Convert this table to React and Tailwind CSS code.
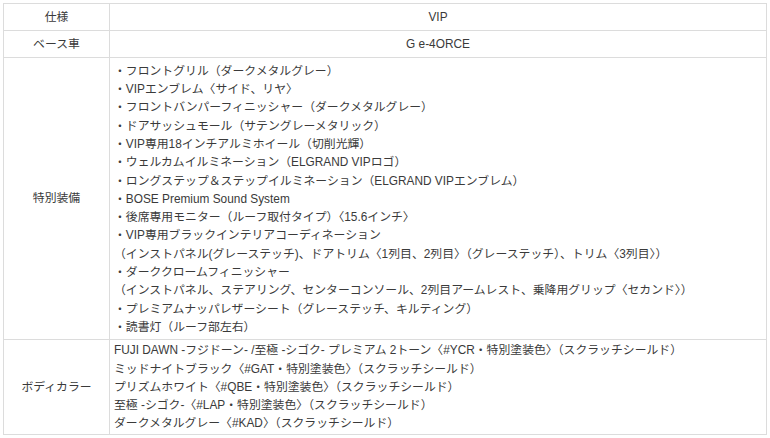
import React from "react";

const equipo = [
  "・フロントグリル（ダークメタルグレー）",
  "・VIPエンブレム〈サイド、リヤ〉",
  "・フロントバンパーフィニッシャー（ダークメタルグレー）",
  "・ドアサッシュモール（サテングレーメタリック）",
  "・VIP専用18インチアルミホイール（切削光輝）",
  "・ウェルカムイルミネーション（ELGRAND VIPロゴ）",
  "・ロングステップ＆ステップイルミネーション（ELGRAND VIPエンブレム）",
  "・BOSE Premium Sound System",
  "・後席専用モニター（ルーフ取付タイプ）〈15.6インチ〉",
  "・VIP専用ブラックインテリアコーディネーション",
  "（インストパネル(グレーステッチ)、ドアトリム〈1列目、2列目〉（グレーステッチ）、トリム〈3列目〉）",
  "・ダーククロームフィニッシャー",
  "（インストパネル、ステアリング、センターコンソール、2列目アームレスト、乗降用グリップ〈セカンド〉）",
  "・プレミアムナッパレザーシート（グレーステッチ、キルティング）",
  "・読書灯（ルーフ部左右）",
];

const colores = [
  "FUJI DAWN -フジドーン- /至極 -シゴク- プレミアム 2トーン〈#YCR・特別塗装色〉（スクラッチシールド）",
  "ミッドナイトブラック〈#GAT・特別塗装色〉（スクラッチシールド）",
  "プリズムホワイト〈#QBE・特別塗装色〉（スクラッチシールド）",
  "至極 -シゴク-〈#LAP・特別塗装色〉（スクラッチシールド）",
  "ダークメタルグレー〈#KAD〉（スクラッチシールド）",
];

const label = "border border-[#dcdcdc] text-center align-middle w-[106px]";
const cell = "border border-[#dcdcdc] align-middle";

export default function App() {
  return (
    <div
      className="bg-white w-[770px] h-[438px] pt-[3px] pl-[3px] text-[#3a3a3a] text-[11.85px] leading-[18.3px]"
      style={{ fontFamily: '"Liberation Sans", "Noto Sans CJK JP", sans-serif' }}
    >
      <table className="border-collapse w-[764px] table-fixed">
        <tbody>
          <tr className="h-[27px]">
            <td className={label}>仕様</td>
            <td className={`${cell} text-center`}>VIP</td>
          </tr>
          <tr className="h-[27px]">
            <td className={label}>ベース車</td>
            <td className={`${cell} text-center`}>G e-4ORCE</td>
          </tr>
          <tr className="h-[282px]">
            <td className={label}>特別装備</td>
            <td className={`${cell} px-[4px] pt-[1px]`}>
              {equipo.map((t, i) => (
                <div key={i} className="whitespace-nowrap">{t}</div>
              ))}
            </td>
          </tr>
          <tr className="h-[95px]">
            <td className={label}>ボディカラー</td>
            <td className={`${cell} px-[4px]`}>
              {colores.map((t, i) => (
                <div key={i} className="whitespace-nowrap">{t}</div>
              ))}
            </td>
          </tr>
        </tbody>
      </table>
    </div>
  );
}
